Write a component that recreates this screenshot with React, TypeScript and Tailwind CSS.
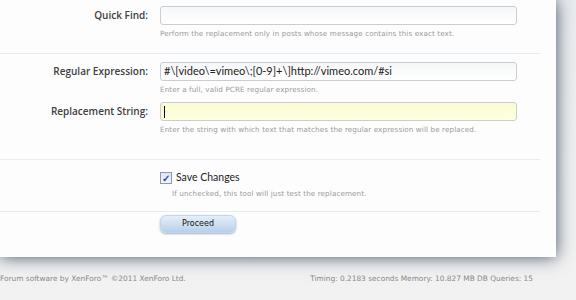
import React from 'react';

const hint = 'text-[7.2px] leading-[10px] text-[#9a9a9a] font-["DejaVu_Sans",sans-serif] tracking-[0.1px]';
const label = 'text-[10px] font-semibold text-[#404040] text-right font-["Open_Sans",sans-serif]';
const inputBase =
  'h-[19px] w-[357px] border border-[#c8ced4] rounded-[3px] px-[3px] text-[11px] text-[#222] font-["Lato",sans-serif] flex items-center';

function FieldRow({
  name,
  value,
  note,
  active,
}: {
  name: string;
  value?: string;
  note: string;
  active?: boolean;
}) {
  return (
    <div className="grid grid-cols-[148px_1fr] gap-x-[12px]">
      <div className={`${label} h-[19px] leading-[19px]`}>{name}</div>
      <div>
        <div
          className={`${inputBase} ${
            active ? 'bg-gradient-to-b from-[#fbfbd0] to-[#ffffe4]' : 'bg-gradient-to-b from-[#f6f7f8] to-white'
          }`}
        >
          {active ? <span className="w-px h-[12px] bg-black" /> : value}
        </div>
        <div className={`${hint} mt-[4px]`}>{note}</div>
      </div>
    </div>
  );
}

export default function App() {
  return (
    <div className="w-[576px] h-[300px] overflow-hidden bg-gradient-to-b from-[#e9ecee] to-[#f2f2f2]">
      <div className="w-[556px] h-[257px] bg-[#fdfdfe] shadow-[0_0_16px_rgba(50,65,88,0.9)] relative z-10 pt-[6px]">
        <FieldRow name="Quick Find:" note="Perform the replacement only in posts whose message contains this exact text." />
        <div className="h-px w-[540px] bg-[#e4ecf1] mt-[14px]" />

        <div className="mt-[8px]">
          <FieldRow
            name="Regular Expression:"
            value="#\[video\=vimeo\;[0-9]+\]http://vimeo.com/#si"
            note="Enter a full, valid PCRE regular expression."
          />
        </div>
        <div className="mt-[7px]">
          <FieldRow
            name="Replacement String:"
            active
            note="Enter the string with which text that matches the regular expression will be replaced."
          />
        </div>
        <div className="h-px w-[540px] bg-[#e4ecf1] mt-[24px]" />

        <div className="pl-[160px] mt-[10px]">
          <div className="flex items-center gap-[4px]">
            <span className="w-[12px] h-[12px] border border-[#8e98b6] bg-gradient-to-b from-[#dfe4f3] to-[#f4f6fb] flex items-center justify-center text-[10px] leading-none text-[#3a45a8] font-bold">
              ✓
            </span>
            <span className="text-[10.5px] text-[#222] font-['Lato',sans-serif]">Save Changes</span>
          </div>
          <div className={`${hint} mt-[3px] pl-[12px]`}>If unchecked, this tool will just test the replacement.</div>
        </div>
        <div className="h-px w-[540px] bg-[#e4ecf1] mt-[12px]" />

        <div className="pl-[160px] pt-[3px] flex">
          <button className="w-[76px] h-[18px] rounded-[6px] bg-gradient-to-b from-[#e6eff8] to-[#b6d0ea] border border-[#c3d5e6] shadow-[0_1px_2px_rgba(80,100,130,0.5)] text-[8px] text-[#111] font-['DejaVu_Sans',sans-serif]">
            Proceed
          </button>
        </div>
      </div>

      <div className="flex justify-between items-center h-[43px] pr-[43px] text-[7.4px] text-[#8a8a8a] font-['DejaVu_Sans',sans-serif]">
        <span>Forum software by XenForo™ ©2011 XenForo Ltd.</span>
        <span>Timing: 0.2183 seconds Memory: 10.827 MB DB Queries: 15</span>
      </div>
    </div>
  );
}
